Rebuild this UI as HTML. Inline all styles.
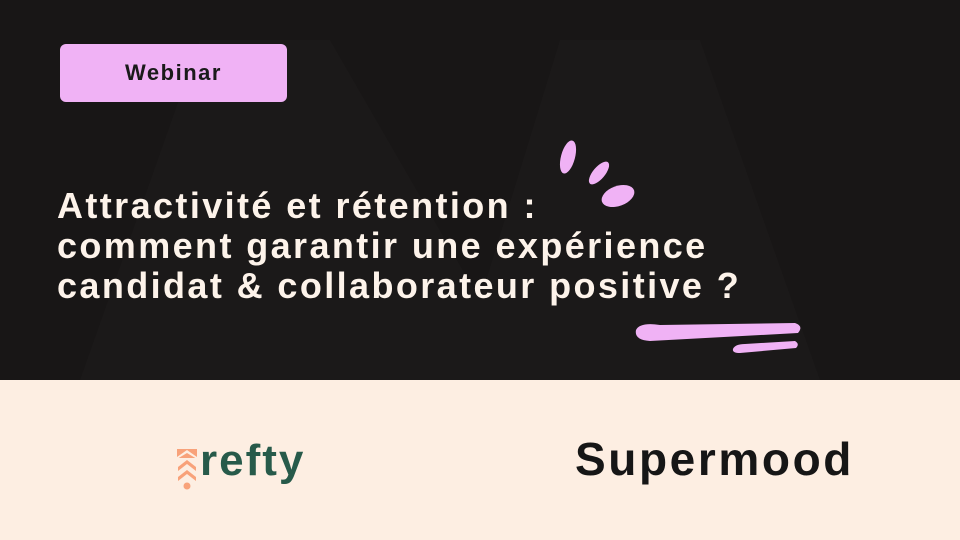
<!DOCTYPE html>
<html><head><meta charset="utf-8"><style>
body{margin:0;width:960px;height:540px;overflow:hidden;background:#181616;font-family:"Liberation Sans",sans-serif;position:relative}
.top{position:absolute;left:0;top:0;width:960px;height:380px;background:#181616;overflow:hidden}
.bot{position:absolute;left:0;top:380px;width:960px;height:160px;background:#fdeee2}
.badge{position:absolute;left:60px;top:44px;width:227px;height:58px;background:#f0b2f5;border-radius:6px;text-align:center;line-height:58px;font-weight:bold;font-size:22px;letter-spacing:1.5px;color:#1a1a1a}
.title{position:absolute;left:57px;top:186px;font-weight:bold;font-size:36px;line-height:40px;letter-spacing:2.4px;color:#fdf3ea;white-space:nowrap}
.refty{position:absolute;left:200px;top:436px;font-weight:bold;font-size:44px;color:#275a4a;letter-spacing:2px}
.sm{position:absolute;left:575px;top:432px;font-weight:bold;font-size:46px;color:#161616;letter-spacing:2.6px}
</style></head><body>
<div class="top">
<svg width="960" height="380" style="position:absolute;left:0;top:0">
<path d="M80 380 L200 40 L330 40 L480 300 L560 40 L700 40 L820 380 Z" fill="#1b1919"/>
<g fill="#f0b2f5">
<ellipse cx="568" cy="157" rx="7" ry="17" transform="rotate(15 568 157)"/>
<ellipse cx="599" cy="173" rx="6" ry="14" transform="rotate(40 599 173)"/>
<ellipse cx="618" cy="196" rx="17" ry="10" transform="rotate(-20 618 196)"/>
<path d="M636 330 Q640 322 660 325 L795 323 Q804 326 798 333 L650 341 Q634 340 636 330Z"/>
<path d="M733 349 Q735 344 745 344 L795 341 Q800 344 796 348 L740 353 Q732 353 733 349Z"/>
</g>
</svg>
<div class="badge">Webinar</div>
<div class="title">Attractivité et rétention :<br>comment garantir une expérience<br>candidat &amp; collaborateur positive ?</div>
</div>
<div class="bot"></div>
<svg width="30" height="50" style="position:absolute;left:172px;top:445px">
<rect x="5" y="4" width="20" height="9" fill="#f8a27a"/>
<path d="M5 12 L15 5 L25 12 L25 14 L15 8 L5 14Z" fill="#fdeee2"/>
<path d="M6 22 L15 15 L24 22 L24 26 L15 19 L6 26Z" fill="#f8a27a"/>
<path d="M6 32 L15 25 L24 32 L24 36 L15 29 L6 36Z" fill="#f8a27a"/>
<circle cx="15" cy="41" r="3.5" fill="#f8a27a"/>
</svg>
<div class="refty">refty</div>
<div class="sm">Supermood</div>
</body></html>
